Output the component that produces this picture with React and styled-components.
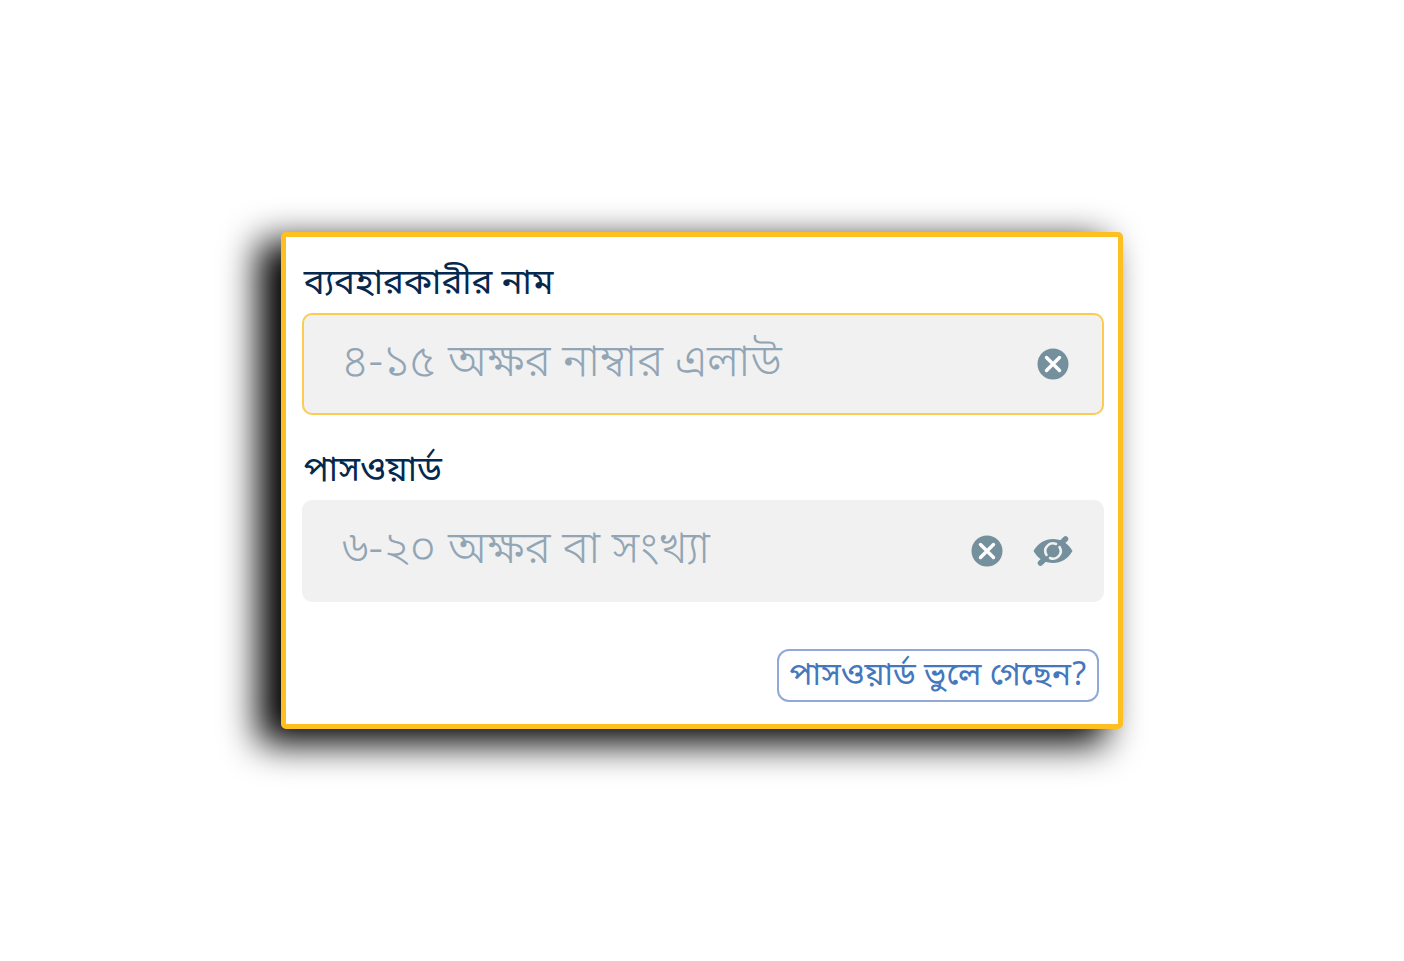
import styled, { createGlobalStyle } from 'styled-components'

const GlobalStyle = createGlobalStyle`
  * {
    box-sizing: border-box;
  }

  body {
    margin: 0;
    background: #fff;
    font-family: 'Noto Sans Bengali', 'Noto Sans', sans-serif;
  }
`

const Page = styled.main`
  min-height: 100vh;
  display: flex;
  justify-content: center;
  align-items: center;
`

const Card = styled.form`
  width: 60%;
  min-width: 320px;
  display: flex;
  flex-direction: column;
  padding: 24px 14px 22px 16px;
  background: #fff;
  border: 5px solid #fdbf22;
  border-radius: 5px;
  box-shadow: -20px 12px 36px 3px #000;
`

const Group = styled.div`
  display: flex;
  flex-direction: column;
  gap: 4px;
  margin-bottom: ${(props) => props.$space};
`

const Label = styled.label`
  padding-left: 2px;
  font-size: 35px;
  line-height: 48px;
  color: #04284e;
`

const Field = styled.div`
  display: flex;
  align-items: center;
  gap: 24px;
  height: 102px;
  padding: 0 28px 0 38px;
  background: #f1f1f1;
  border: 2px solid ${(props) => (props.$active ? '#fbcb52' : '#f1f1f1')};
  border-radius: 10px;
`

const Input = styled.input`
  flex: 1;
  min-width: 0;
  height: 80px;
  padding: 0;
  border: none;
  outline: none;
  background: transparent;
  font-family: inherit;
  font-size: 45px;
  font-weight: 300;
  color: #04284e;

  &::placeholder {
    color: #92a5b5;
    opacity: 1;
  }
`

const IconButton = styled.button`
  display: flex;
  justify-content: center;
  align-items: center;
  width: 42px;
  height: 42px;
  padding: 0;
  border: none;
  background: transparent;
  color: #75909d;
  cursor: pointer;
`

const ForgotButton = styled.button`
  align-self: flex-end;
  height: 53px;
  margin-right: 5px;
  padding: 2px 10px 0;
  border: 2px solid #91a9d7;
  border-radius: 12px;
  background: #fff;
  font-family: inherit;
  font-size: 32px;
  line-height: 44px;
  color: #4478bd;
  cursor: pointer;
`

const ClearIcon = () => (
  <svg width="32" height="32" viewBox="0 0 32 32" aria-hidden="true">
    <circle cx="16" cy="16" r="15.5" fill="currentColor" />
    <path d="M9.5 9.5l13 13M22.5 9.5l-13 13" stroke="#fff" strokeWidth="3.4" strokeLinecap="round" />
  </svg>
)

const EyeOffIcon = () => (
  <svg width="40" height="32" viewBox="0 0 40 32" aria-hidden="true">
    <path d="M0.5 16C5 8 12 4 20 4s15 4 19.5 12C35 24 28 28 20 28S5 24 0.5 16z" fill="currentColor" />
    <path d="M7.5 28L32.5 4" stroke="currentColor" strokeWidth="5.5" strokeLinecap="round" />
    <path
      d="M13.5 20A7.6 7.6 0 0 1 23 9M26.500 12A7.6 7.6 0 0 1 17 23"
      fill="none"
      stroke="#f1f1f1"
      strokeWidth="2.6"
      strokeLinecap="round"
    />
  </svg>
)

const App = () => (
  <>
    <GlobalStyle />
    <Page>
      <Card onSubmit={(e) => e.preventDefault()}>
        <Group $space="33px">
          <Label htmlFor="username">ব্যবহারকারীর নাম</Label>
          <Field $active>
            <Input id="username" type="text" placeholder="৪-১৫ অক্ষর নাম্বার এলাউ" />
            <IconButton type="button" aria-label="Clear">
              <ClearIcon />
            </IconButton>
          </Field>
        </Group>
        <Group $space="47px">
          <Label htmlFor="password">পাসওয়ার্ড</Label>
          <Field>
            <Input id="password" type="password" placeholder="৬-২০ অক্ষর বা সংখ্যা" />
            <IconButton type="button" aria-label="Clear">
              <ClearIcon />
            </IconButton>
            <IconButton type="button" aria-label="Show password">
              <EyeOffIcon />
            </IconButton>
          </Field>
        </Group>
        <ForgotButton type="button">পাসওয়ার্ড ভুলে গেছেন?</ForgotButton>
      </Card>
    </Page>
  </>
)

export default App
